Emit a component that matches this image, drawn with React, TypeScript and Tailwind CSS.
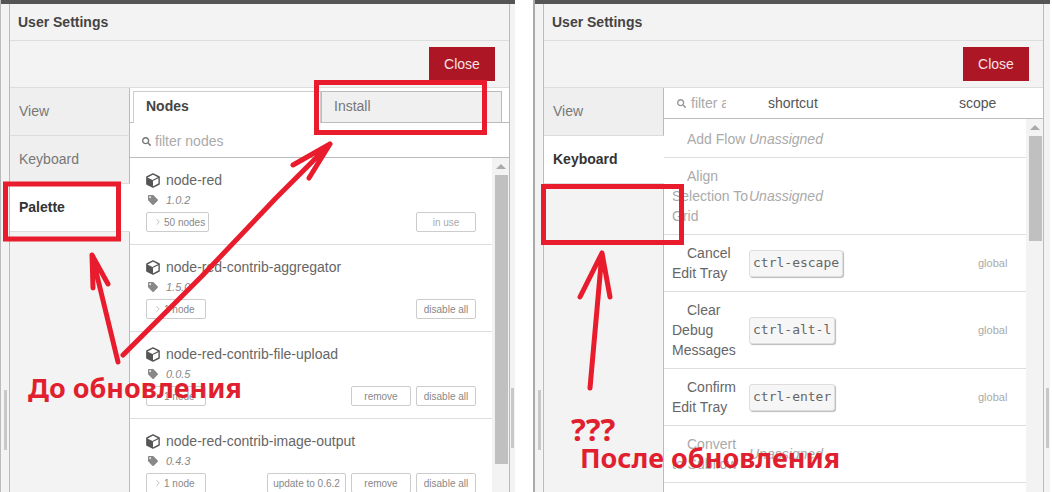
import React from "react";
import { FaTag, FaSearch } from "react-icons/fa";
import { ChevronRight } from "lucide-react";

const sans = "font-['Liberation_Sans',Arial,sans-serif]";

const nodes = [
    { name: "node-red", version: "1.0.2", count: "50 nodes", wide: true, actions: ["in use"] },
    { name: "node-red-contrib-aggregator", version: "1.5.0", count: "1 node", actions: ["disable all"] },
    { name: "node-red-contrib-file-upload", version: "0.0.5", count: "1 node", actions: ["remove", "disable all"] },
    { name: "node-red-contrib-image-output", version: "0.4.3", count: "1 node", actions: ["update to 0.6.2", "remove", "disable all"] },
];

const shortcuts = [
    { lines: ["Add Flow"], rowClass: "h-[38px] mt-px" },
    { lines: ["Align", "Selection To", "Grid"] },
    { lines: ["Cancel", "Edit Tray"], keys: "ctrl-escape" },
    { lines: ["Clear", "Debug", "Messages"], keys: "ctrl-alt-l" },
    { lines: ["Confirm", "Edit Tray"], keys: "ctrl-enter" },
    { lines: ["Convert", "to Subflow"] },
];

const CubeIcon = () => (
    <svg width="14" height="15" viewBox="0 0 16 17" className="shrink-0">
        <path d="M8 1 L15 4.5 V12.5 L8 16 L1 12.5 V4.5 Z" fill="#fff" stroke="#555" strokeWidth="1.6" strokeLinejoin="round" />
        <path d="M1 4.8 L8 8.3 V16 L1 12.5 Z" fill="#555" />
        <path d="M8 8.3 L15 4.8" stroke="#555" strokeWidth="1.4" />
    </svg>
);

const SideTab = ({ label, active }: { label: string; active?: boolean }) => (
    <div className={`h-[48px] shrink-0 flex items-center pl-[9px] text-[14px] border-b ${active ? "bg-white font-bold text-[#333] border-[#ddd]" : "bg-[#efefef] text-[#777] border-[#ddd] border-r border-r-[#bbb]"}`}>
        {label}
    </div>
);

const Sidebar = ({ active }: { active: string }) => (
    <div className="w-[120px] shrink-0 flex flex-col bg-[#f3f3f3]">
        <SideTab label="View" active={active === "View"} />
        <SideTab label="Keyboard" active={active === "Keyboard"} />
        {active === "Keyboard"
            ? <div className="h-[48px] shrink-0 border-r border-[#bbb] bg-[#f3f3f3]" />
            : <SideTab label="Palette" active />}
        <div className="flex-1 border-r border-[#bbb] bg-[#f3f3f3]" />
    </div>
);

const Scrollbar = ({ thumb }: { thumb: string }) => (
    <div className="w-[17px] shrink-0 bg-[#f3f3f3] flex flex-col items-center">
        <div className="h-[17px] shrink-0 flex items-center justify-center w-full">
            <div className="w-0 h-0 border-x-[5px] border-x-transparent border-b-[5px] border-b-[#aaa]" />
        </div>
        <div className={`w-[13px] ml-px bg-[#c0c0c0] ${thumb}`} />
    </div>
);

const Shell = ({ sidebar, children, edge, left, right }: { sidebar: string; children: React.ReactNode; edge: string; left: string; right: string }) => (
    <div className={`flex flex-col shrink-0 h-[492px] ${edge}`}>
        <div className="h-[4px] shrink-0 bg-[#555]" />
        <div className="flex flex-1 min-h-0">
            <div className={`${left} shrink-0 bg-[#f3f3f3] flex justify-center`}>
                <div className="w-[3px] h-[60px] mt-[386px] bg-[#c8c8c8]" />
            </div>
            <div className="w-[501px] shrink-0 flex flex-col border-x border-[#bbb] bg-[#f3f3f3]">
                <div className="h-[37px] shrink-0 border-b border-[#ddd] pl-2 flex items-center text-[14px] font-bold text-[#444]">
                    User Settings
                </div>
                <div className="h-[47px] shrink-0 border-b border-[#ddd] flex justify-end items-start pt-[6px] pr-[14px]">
                    <button className="w-[66px] h-[34px] bg-[#ad1625] text-[#f3e3e5] text-[14px]">Close</button>
                </div>
                <div className="flex flex-1 min-h-0">
                    <Sidebar active={sidebar} />
                    <div className="flex-1 min-w-0 flex flex-col bg-white">{children}</div>
                </div>
            </div>
            <div className={`${right} shrink-0 bg-[#f3f3f3] flex justify-center`}>
                <div className="w-[3px] h-[60px] mt-[384px] bg-[#c8c8c8]" />
            </div>
        </div>
    </div>
);

const NodeButton = ({ label, width, faint }: { label: string; width: string; faint?: boolean }) => (
    <div className={`${width} h-[20px] border border-[#ccc] rounded-[2px] flex items-center justify-center text-[10px] ${faint ? "text-[#aaa]" : "text-[#888]"}`}>
        {label}
    </div>
);

const actionWidth = (label: string) => (label === "update to 0.6.2" ? "w-[79px]" : "w-[60px]");

const NodeItem = ({ name, version, count, wide, actions }: typeof nodes[number]) => (
    <div className="h-[87px] shrink-0 border-b border-[#ddd] pt-3 pl-4 pr-4">
        <div className="h-5 flex items-center text-[14px] text-[#666]">
            <CubeIcon />
            <span className="ml-[6px]">{name}</span>
        </div>
        <div className="h-5 flex items-center">
            <FaTag className="w-[10px] h-[10px] ml-[2px] text-[#888]" />
            <span className="ml-2 text-[11px] italic text-[#888]">{version}</span>
        </div>
        <div className="mt-[2px] flex justify-between">
            <div className={`${wide ? "w-[63px]" : "w-[60px]"} h-[20px] border border-[#ccc] rounded-[2px] flex items-center pl-[6px] text-[10px] text-[#888] whitespace-nowrap`}>
                <ChevronRight size={10} strokeWidth={1.25} className="mr-[1px] shrink-0" />
                {count}
            </div>
            <div className="flex gap-[5px]">
                {actions.map((label) => (
                    <NodeButton key={label} label={label} width={actionWidth(label)} faint={label === "in use"} />
                ))}
            </div>
        </div>
    </div>
);

const PalettePane = () => (
    <>
        <div className="h-[35px] shrink-0 flex items-end pl-[3px] border-b border-[#bbb] relative">
            <div className="w-[188px] h-[32px] -mb-px bg-white border-x border-t border-[#ccc] pl-3 pb-[2px] flex items-center text-[14px] font-bold text-[#444]">
                Nodes
            </div>
            <div className="w-[181px] h-[32px] -mb-px bg-[#f0f0f0] border border-[#bbb] pl-3 pb-[2px] flex items-center text-[14px] text-[#777]">
                Install
            </div>
        </div>
        <div className="h-[35px] shrink-0 border-b border-[#bbb] flex items-center pl-3 pt-[2px] text-[14px] text-[#aaa]">
            <FaSearch className="w-[9px] h-[9px] text-[#777]" />
            <span className="ml-[4px]">filter nodes</span>
        </div>
        <div className="flex flex-1 min-h-0 overflow-hidden">
            <div className="flex-1 min-w-0 flex flex-col">
                {nodes.map((node) => <NodeItem key={node.name} {...node} />)}
            </div>
            <Scrollbar thumb="h-[289px]" />
        </div>
    </>
);

const KeyboardPane = () => (
    <>
        <div className="h-[31px] shrink-0 border-b border-[#bbb] flex items-center text-[14px] text-[#555]">
            <FaSearch className="w-[9px] h-[9px] ml-[13px] text-[#999]" />
            <span className="ml-[5px] w-[35px] overflow-hidden whitespace-nowrap text-[#aaa]">filter actions</span>
            <span className="ml-[42px] w-[191px]">shortcut</span>
            <span>scope</span>
        </div>
        <div className="flex flex-1 min-h-0 overflow-hidden">
            <div className="flex-1 min-w-0 flex flex-col">
                {shortcuts.map((row) => (
                    <div key={row.lines[0]} className={`shrink-0 border-b border-[#ddd] pl-2 flex items-center text-[14px] leading-5 ${row.rowClass ?? "py-2"} ${row.keys ? "text-[#666]" : "text-[#aaa]"}`}>
                        <div className="w-[77px] shrink-0 whitespace-nowrap">
                            {row.lines.map((line, i) => (
                                <div key={line} className={i === 0 ? "pl-[15px]" : ""}>{line}</div>
                            ))}
                        </div>
                        <div className="w-[229px] shrink-0">
                            {row.keys
                                ? <kbd className="inline-flex items-center h-[27px] px-[3px] rounded-[3px] border border-[#ddd] bg-[#f6f6f6] shadow-[1px_1px_1px_#bbb] font-['DejaVu_Sans_Mono',monospace] text-[13px] text-[#666]">{row.keys}</kbd>
                                : <span className="italic text-[#aaa]">Unassigned</span>}
                        </div>
                        {row.keys && <span className="text-[11px] text-[#aaa]">global</span>}
                    </div>
                ))}
            </div>
            <Scrollbar thumb="h-[105px]" />
        </div>
    </>
);

const Annotations = () => (
    <>
        <svg className="absolute inset-0 pointer-events-none" width="1052" height="492" fill="none" stroke="#e81c2c" strokeLinecap="round" strokeLinejoin="round">
            <rect x="5.5" y="184" width="113" height="55" strokeWidth="5" strokeLinejoin="miter" />
            <rect x="316.5" y="82.5" width="168" height="50" strokeWidth="5" strokeLinejoin="miter" />
            <rect x="543.5" y="186.5" width="138" height="56" strokeWidth="5" strokeLinejoin="miter" />
            <path d="M123 355 L202 276 L276 198 L330 144 M293 165 L330 144 L309 178" strokeWidth="5" />
            <path d="M118 362 L92 255 M93 288 L92 255 L108 284" strokeWidth="5" />
            <path d="M590 388 L602 253 M580 297 L602 253 L610 297" strokeWidth="5" />
        </svg>
        <div className="absolute left-[28px] top-[369px] text-[27px] leading-[38px] font-bold text-[#e01f2f] whitespace-nowrap font-['Noto_Sans',sans-serif]">До обновления</div>
        <div className="absolute left-[571px] top-[410px] text-[31px] leading-[38px] font-bold text-[#e01f2f] whitespace-nowrap font-['Noto_Sans',sans-serif]">???</div>
        <div className="absolute left-[580px] top-[439px] text-[27px] leading-[38px] font-bold text-[#e01f2f] whitespace-nowrap font-['Noto_Sans',sans-serif]">После обновления</div>
    </>
);

const App: React.FC = () => {
    return (
        <div className={`relative w-[1052px] h-[492px] overflow-hidden bg-white flex ${sans}`}>
            <Shell sidebar="Palette" edge="w-[515px] border-l border-[#bbb]" left="w-[8px]" right="w-[5px]">
                <PalettePane />
            </Shell>
            <div className="w-[18px] shrink-0" />
            <Shell sidebar="Keyboard" edge="w-[517px] border-l-2 border-[#aaa]" left="w-[8px]" right="w-[6px]">
                <KeyboardPane />
            </Shell>
            <Annotations />
        </div>
    );
};

export default App;
